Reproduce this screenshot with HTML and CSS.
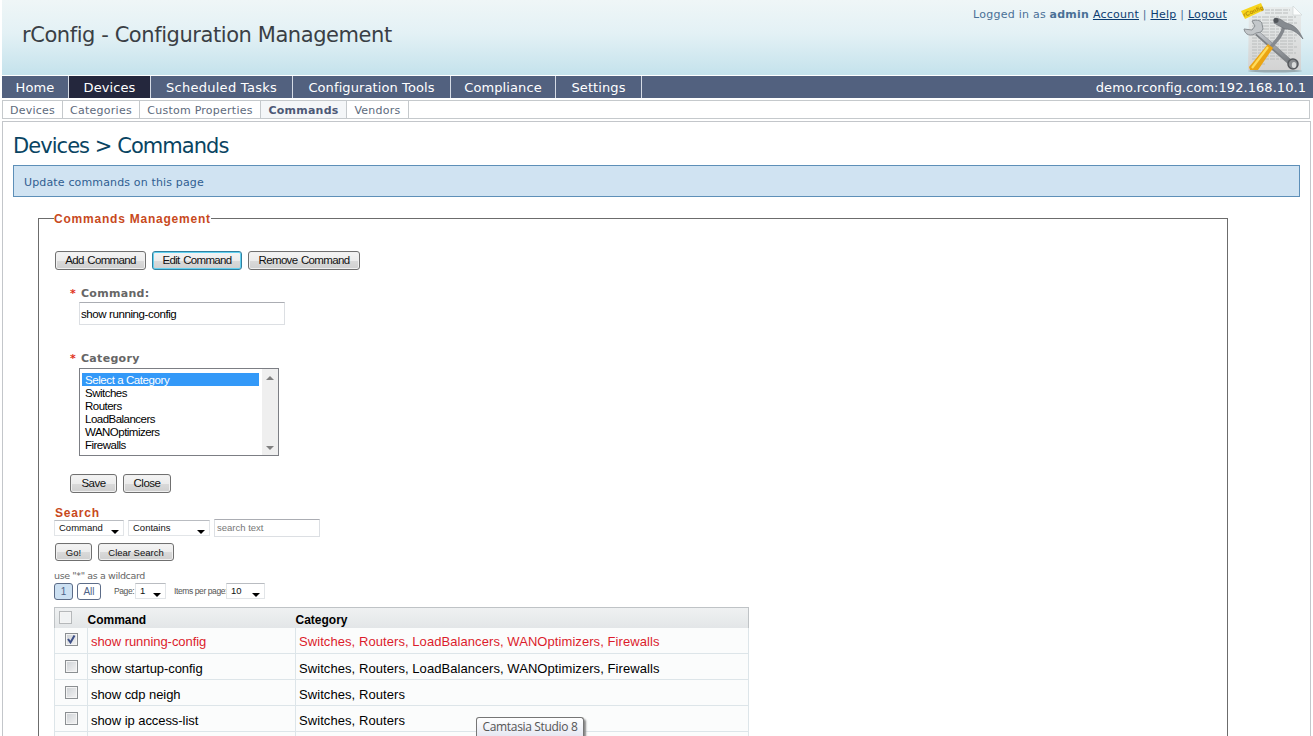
FILE: index.html
```
<!DOCTYPE html>
<html lang="en">

<head>
    <meta charset="UTF-8">
    <title>rConfig - Configuration Management</title>
    <link rel="stylesheet" href="styles.css">
</head>

<body>
    <header class="header">
        <div class="brand">rConfig - Configuration Management</div>
        <div class="login-info">Logged in as <b>admin</b> <a href="#">Account</a> | <a href="#">Help</a> | <a href="#">Logout</a></div>
        <svg class="logo" width="64" height="72" viewBox="0 0 64 72">
            <defs>
                <linearGradient id="paper" x1="0" y1="0" x2="0" y2="1">
                    <stop offset="0" stop-color="#e9eded" />
                    <stop offset="1" stop-color="#d3d3d3" />
                </linearGradient>
                <linearGradient id="steel" x1="0" y1="0" x2="1" y2="1">
                    <stop offset="0" stop-color="#c4c8cc" />
                    <stop offset="1" stop-color="#75797e" />
                </linearGradient>
            </defs>
            <ellipse cx="35" cy="69" rx="27" ry="1.500" fill="#7c8588" opacity=".6" />
            <path d="M9 5h44l8 9v54H8z" fill="url(#paper)" />
            <path d="M53 4v9h9z" fill="#fbfdfd" stroke="#cbd0d2" stroke-width=".6" />
            <path d="M25 8h25M25 11h24M12 15h44M12 18h42M12 21h45M12 24h41M12 27h45M12 30h42M12 33h45M12 36h43M12 39h44M12 42h41M12 45h45M12 48h42M12 51h44M12 54h38M12 57h41M12 62h13" stroke="#b9bcbc" stroke-width="1" stroke-dasharray="5 1 3 1 7 1" />
            <path d="M1 9L21 1l3 7L5 17z" fill="#f7d51d" />
            <text x="4" y="15" class="logo-tag" transform="rotate(-22 4 15)">rConfig</text>
            <path d="M17 31L51 61" stroke="#7d8185" stroke-width="5.500" />
            <path d="M17 30L51 60" stroke="url(#steel)" stroke-width="3.500" />
            <path d="M12 19l3 5-3 4-8-1c1 6 7 8 12 4l5-1 2-3-1-5c0-3-5-5-10-3z" fill="#c3c7ca" stroke="#8b9094" stroke-width="1" />
            <circle cx="53" cy="62" r="5" fill="#888b8e" stroke="#55585c" stroke-width="1.500" />
            <ellipse cx="54" cy="63" rx="2.200" ry="3" fill="#d9dbdb" />
            <path d="M44 24C42 34 36 39 30 46" fill="none" stroke="#85898e" stroke-width="3.500" />
            <path d="M35 16l5 1 6 4c9 2 13 7 17 16-6-7-11-10-18-10l-4-2-7-4z" fill="#868b90" stroke="#696d72" stroke-width=".6" />
            <ellipse cx="36" cy="18.500" rx="2.600" ry="2.400" fill="#505459" />
            <path d="M28 42l5 4L18 68l-8 0-1-3z" fill="#eba413" />
            <path d="M28 45L12 66" stroke="#ffdc5a" stroke-width="2.200" />
        </svg>
    </header>

    <nav class="main-nav">
        <a href="#" class="w-home">Home</a>
        <a href="#" class="w-devices current">Devices</a>
        <a href="#" class="w-tasks">Scheduled Tasks</a>
        <a href="#" class="w-tools">Configuration Tools</a>
        <a href="#" class="w-compliance">Compliance</a>
        <a href="#" class="w-settings">Settings</a>
        <span class="host">demo.rconfig.com:192.168.10.1</span>
    </nav>
    <nav class="sub-nav">
        <a href="#" class="s-devices">Devices</a>
        <a href="#" class="s-categories">Categories</a>
        <a href="#" class="s-custom">Custom Properties</a>
        <a href="#" class="s-commands current">Commands</a>
        <a href="#" class="s-vendors">Vendors</a>
    </nav>

    <main class="content">
        <h1>Devices &gt; Commands</h1>
        <div class="info">Update commands on this page</div>

        <fieldset class="panel">
            <legend>Commands Management</legend>
            <div class="toolbar">
                <button class="btn b-add">Add Command</button>
                <button class="btn b-edit focused">Edit Command</button>
                <button class="btn b-remove">Remove Command</button>
            </div>

            <form class="edit-form">
                <label for="command"><i>*</i>Command:</label>
                <input type="text" id="command" class="command-input" value="show running-config">
                <label><i>*</i>Category</label>
                <div class="listbox">
                    <ul>
                        <li class="selected">Select a Category</li>
                        <li>Switches</li>
                        <li>Routers</li>
                        <li>LoadBalancers</li>
                        <li>WANOptimizers</li>
                        <li>Firewalls</li>
                    </ul>
                    <div class="scrollbar"><span class="up"></span><span class="down"></span></div>
                </div>
                <div class="form-buttons">
                    <button type="button" class="btn b-save">Save</button>
                    <button type="button" class="btn b-close">Close</button>
                </div>
            </form>

            <div class="search-title">Search</div>
            <div class="search-row">
                <span class="dropdown d-field">Command</span>
                <span class="dropdown d-match">Contains</span>
                <input type="text" class="search-input" placeholder="search text">
            </div>
            <div class="search-buttons">
                <button class="btn b-go">Go!</button>
                <button class="btn b-clear">Clear Search</button>
            </div>
            <div class="hint">use "*" as a wildcard</div>
            <div class="pager">
                <a href="#" class="page current">1</a>
                <a href="#" class="page all">All</a>
                <span class="page-label">Page:</span>
                <span class="dropdown d-page">1</span>
                <span class="items-label">Items per page:</span>
                <span class="dropdown d-items">10</span>
            </div>

            <table class="grid">
                <thead>
                    <tr>
                        <th class="c-check"><span class="check plain"></span></th>
                        <th class="c-command">Command</th>
                        <th>Category</th>
                    </tr>
                </thead>
                <tbody>
                    <tr class="picked">
                        <td><span class="check"><svg width="11" height="11" viewBox="0 0 11 11"><path d="M2 5l2.500 3.500L8.500 1.500" /></svg></span></td>
                        <td>show running-config</td>
                        <td>Switches, Routers, LoadBalancers, WANOptimizers, Firewalls</td>
                    </tr>
                    <tr>
                        <td><span class="check"></span></td>
                        <td>show startup-config</td>
                        <td>Switches, Routers, LoadBalancers, WANOptimizers, Firewalls</td>
                    </tr>
                    <tr>
                        <td><span class="check"></span></td>
                        <td>show cdp neigh</td>
                        <td>Switches, Routers</td>
                    </tr>
                    <tr>
                        <td><span class="check"></span></td>
                        <td>show ip access-list</td>
                        <td>Switches, Routers</td>
                    </tr>
                    <tr class="last">
                        <td></td>
                        <td></td>
                        <td></td>
                    </tr>
                </tbody>
            </table>
        </fieldset>
    </main>
    <div class="tooltip">Camtasia Studio 8</div>
</body>

</html>
```

FILE: styles.css
```
* {
    box-sizing: border-box;
    margin: 0;
    padding: 0;
}

body {
    width: 1313px;
    height: 736px;
    overflow: hidden;
    position: relative;
    padding-left: 2px;
    background: #fff;
    font-family: Verdana, "DejaVu Sans", sans-serif;
    font-size: 11px;
}

/* Header */
.header {
    height: 75px;
    display: flex;
    background: linear-gradient(#eff6f7, #e3f1f5 45%, #c4e2ec);
}

.brand {
    flex: 1;
    padding: 22px 0 0 20px;
    font: 21px/26px Tahoma, "DejaVu Sans", sans-serif;
    letter-spacing: -0.43px;
    color: #3a3f45;
}

.login-info {
    padding-top: 8px;
    margin-right: 13px;
    line-height: 14px;
    letter-spacing: 0.24px;
    color: #4a7096;
    white-space: nowrap;
}

.login-info a {
    color: #0c3c70;
}

.logo {
    margin: 2px 9px 0 0;
}

.logo-tag {
    font: bold 6px "Liberation Sans", sans-serif;
    fill: #b88b00;
}

/* Navigation */
.main-nav {
    display: flex;
    height: 22px;
    margin-top: 1px;
    background: #52617f;
    font-size: 13px;
    line-height: 23px;
    letter-spacing: 0.1px;
}

.main-nav a {
    color: #fff;
    text-align: center;
    text-decoration: none;
    white-space: nowrap;
    border-right: 1px solid #d5dbe5;
}

.main-nav .current {
    background: #24273d;
}

.w-home { width: 67px; }
.w-devices { width: 82px; }
.w-tasks { width: 142px; letter-spacing: 0.28px; }
.w-tools { width: 158px; }
.w-compliance { width: 105px; }
.w-settings { width: 86px; }

.host {
    margin-left: auto;
    padding-right: 7px;
    letter-spacing: 0.05px;
    color: #fff;
}

.sub-nav {
    display: flex;
    height: 19px;
    margin: 2px 3px 0 0;
    border: 1px solid #c5c9cc;
    line-height: 19px;
    letter-spacing: 0.25px;
}

.sub-nav a {
    height: 17px;
    color: #5d6a7c;
    text-align: center;
    text-decoration: none;
    white-space: nowrap;
    border-right: 1px solid #c5c9cc;
}

.sub-nav .current {
    background: #f4f6f8;
    color: #4d5876;
    font-weight: bold;
}

.s-devices { width: 60px; }
.s-categories { width: 77px; }
.s-custom { width: 121px; }
.s-commands { width: 86px; }
.s-vendors { width: 62px; }

/* Content */
.content {
    height: 615px;
    margin: 2px 2px 0 0;
    padding: 0 10px;
    border: 1px solid #c3c6ca;
    border-bottom: 0;
    overflow: hidden;
}

h1 {
    height: 43px;
    padding-top: 11px;
    font: 21px/27px Tahoma, "DejaVu Sans", sans-serif;
    letter-spacing: -0.95px;
    color: #094462;
}

.info {
    height: 32px;
    padding-left: 10px;
    border: 1px solid #5d8fb8;
    background: #d0e3f2;
    color: #2f5e91;
    line-height: 33px;
    letter-spacing: 0.15px;
}

.panel {
    width: 1190px;
    height: 540px;
    margin: 15px 0 0 25px;
    padding: 0 0 0 15px;
    border: 1px solid #6c6c6c;
    border-bottom: 0;
}

legend {
    height: 13px;
    font: bold 12px/14px "Liberation Sans", Arial, sans-serif;
    letter-spacing: 0.78px;
    color: #c8491c;
}

.toolbar {
    display: flex;
    gap: 6px;
    padding: 26px 0 0 1px;
}

.btn {
    height: 19px;
    border: 1px solid #707070;
    border-radius: 3px;
    background: linear-gradient(#f4f4f4, #ececec 50%, #dadada 51%, #cfcfcf);
    box-shadow: inset 0 0 0 1px #f0f0f0;
    font: 11.500px/17px "Liberation Sans", Arial, sans-serif;
    letter-spacing: -0.66px;
    word-spacing: 1px;
    color: #111;
    white-space: nowrap;
}

.focused {
    border-color: #31809f;
    box-shadow: inset 0 0 0 1px #62d0f0;
}

.b-add { width: 91px; }
.b-edit { width: 90px; }
.b-remove { width: 112px; }
.b-save { width: 47px; }
.b-close { width: 48px; }
.b-go { width: 37px; }
.b-clear { width: 76px; }

.edit-form {
    padding: 16px 0 0 16px;
}

.edit-form label {
    display: flex;
    height: 16px;
    line-height: 16px;
    letter-spacing: 0.3px;
    font-weight: bold;
    color: #666;
}

.edit-form label i {
    width: 11px;
    font-style: normal;
    color: #e03020;
}

.command-input {
    display: block;
    width: 206px;
    height: 23px;
    margin: 0 0 26px 9px;
    padding: 0 1px;
    border: 1px solid #dcdfe3;
    border-top-color: #abadb3;
    font: 11.500px "Liberation Sans", Arial, sans-serif;
    letter-spacing: -0.4px;
}

.listbox {
    display: flex;
    width: 200px;
    height: 88px;
    margin: 1px 0 0 9px;
    border: 1px solid #7c7e84;
    font: 11.500px/15px "Liberation Sans", Arial, sans-serif;
    letter-spacing: -0.52px;
}

.listbox ul {
    flex: 1;
    padding: 4px 3px 0 2px;
    list-style: none;
}

.listbox li {
    height: 13px;
    padding-left: 3px;
}

.listbox .selected {
    background: #3399f8;
    color: #fff;
    letter-spacing: -0.42px;
}

.scrollbar {
    width: 16px;
    padding: 7px 4px 5px;
    background: #efefef;
    display: flex;
    flex-direction: column;
    justify-content: space-between;
}

.up,
.down {
    border: 4px solid transparent;
    border-top-width: 0;
    border-bottom: 4px solid #808080;
}

.down {
    border-bottom-width: 0;
    border-top: 4px solid #808080;
}

.form-buttons {
    display: flex;
    gap: 6px;
    padding-top: 18px;
}

.form-buttons .btn {
    letter-spacing: -0.5px;
}

/* Search */
.search-title {
    margin-top: 13px;
    padding-left: 1px;
    font: bold 12px/14px "Liberation Sans", Arial, sans-serif;
    letter-spacing: 0.8px;
    color: #c8491c;
}

.search-row {
    display: flex;
    gap: 4px;
    align-items: flex-start;
    height: 18px;
    margin-top: -1px;
}

.dropdown {
    position: relative;
    height: 16px;
    padding-left: 4px;
    border: 1px solid #e2e5e8;
    border-top-color: #b9bcc1;
    font: 9.500px/14px "Liberation Sans", Arial, sans-serif;
    color: #111;
    white-space: nowrap;
}

.search-row .dropdown {
    margin-top: 1px;
}

.dropdown::after {
    content: "";
    position: absolute;
    right: 4px;
    bottom: 1px;
    border: 4px solid transparent;
    border-top-color: #000;
    border-bottom-width: 0;
}

.d-field { width: 70px; }
.d-match { width: 82px; }
.d-page { width: 31px; }
.d-items { width: 39px; }

.search-input {
    width: 106px;
    height: 18px;
    padding: 0 2px 1px;
    border: 1px solid #dcdfe3;
    border-top-color: #abadb3;
    font: 9.500px "Liberation Sans", Arial, sans-serif;
}

.search-input::placeholder {
    color: #777;
}

.search-buttons {
    display: flex;
    gap: 6px;
    padding: 6px 0 0 1px;
}

.search-buttons .btn {
    height: 18px;
    font-size: 9.500px;
    letter-spacing: 0;
    word-spacing: 0;
}

.hint {
    margin-top: 9px;
    font: 9.500px/12px "DejaVu Sans", sans-serif;
    letter-spacing: -0.38px;
    color: #666;
}

.pager {
    display: flex;
    height: 18px;
    align-items: center;
}

.page {
    width: 19px;
    height: 17px;
    border: 1px solid #5c6c88;
    border-radius: 3px;
    font: 10px/16px "Liberation Sans", Arial, sans-serif;
    text-align: center;
    text-decoration: none;
    color: #4d6286;
}

.page.current {
    background: #cce0f2;
}

.page.all {
    width: 24px;
    margin-left: 4px;
}

.page-label,
.items-label {
    font: 8.500px "Liberation Sans", Arial, sans-serif;
    letter-spacing: -0.4px;
    color: #555;
    white-space: nowrap;
}

.page-label {
    width: 21px;
    margin-left: 13px;
}

.items-label {
    width: 52px;
    margin-left: 8px;
}

/* Commands table */
.grid {
    width: 695px;
    margin-top: 7px;
    table-layout: fixed;
    border-collapse: collapse;
    font: 13px "Liberation Sans", Arial, sans-serif;
    color: #000;
}

.grid thead tr {
    height: 20px;
    background: linear-gradient(#eff1f2, #e3e6e8);
}

.grid thead {
    border: 1px solid #bfc3c6;
    border-bottom: 0;
}

.grid th {
    text-align: left;
    font-size: 12px;
    padding-top: 4px;
}

.c-check { width: 33px; }
.c-command { width: 208px; }

.grid td {
    height: 26px;
    padding: 3px 0 0 3px;
    border: 1px solid #dde5e9;
    border-top: 0;
    background: #fbfcfc;
    letter-spacing: -0.06px;
}

.grid td:last-child {
    letter-spacing: 0.07px;
}

.grid .last td {
    height: 5px;
    padding: 0;
    border-bottom: 0;
}

.picked {
    color: #dc1c2c;
}

.check {
    display: block;
    width: 13px;
    height: 13px;
    margin: -4px 0 0 7px;
    border: 1px solid #8b8f92;
    background: linear-gradient(135deg, #ccd0d4, #f4f4f4);
    box-shadow: inset 0 0 0 1px #f4f4f4;
}

.check.plain {
    margin: -5px 0 0 4px;
    border-color: #b5b8ba;
    background: #f0f2f3;
}

.check svg {
    display: block;
    fill: none;
    stroke: #3d4f86;
    stroke-width: 2;
}

.tooltip {
    position: absolute;
    left: 476px;
    top: 717px;
    width: 108px;
    height: 19px;
    border: 1px solid #767676;
    border-bottom: 0;
    border-radius: 3px 3px 0 0;
    background: linear-gradient(#fff, #e6e8f2);
    box-shadow: 2px 2px 2px #888;
    font: 12px/18px "Open Sans", "Noto Sans", sans-serif;
    letter-spacing: -0.33px;
    text-align: center;
    white-space: nowrap;
    color: #555;
}
```
